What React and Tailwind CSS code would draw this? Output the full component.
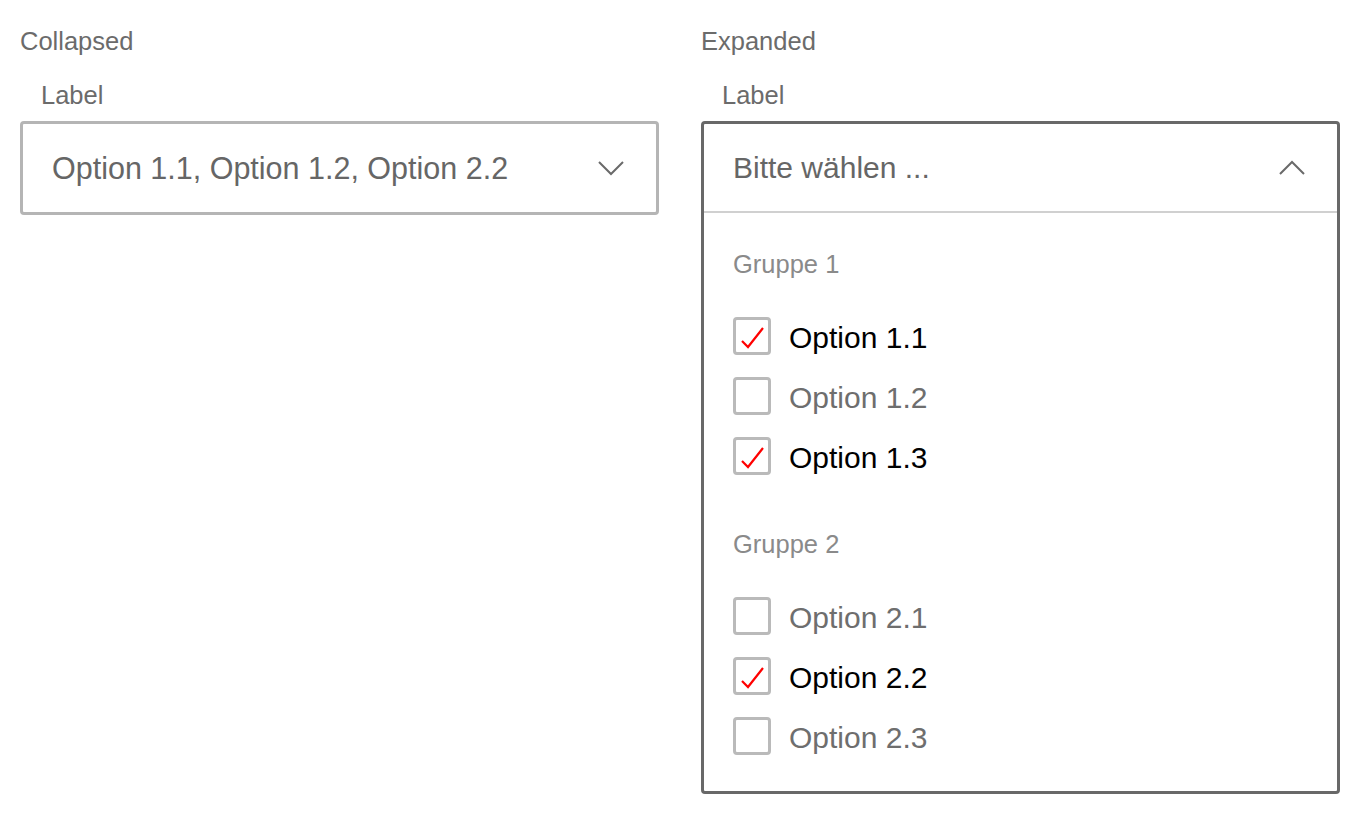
import React from "react";

const groups = [
  {
    name: "Gruppe 1",
    options: [
      { label: "Option 1.1", checked: true },
      { label: "Option 1.2", checked: false },
      { label: "Option 1.3", checked: true },
    ],
  },
  {
    name: "Gruppe 2",
    options: [
      { label: "Option 2.1", checked: false },
      { label: "Option 2.2", checked: true },
      { label: "Option 2.3", checked: false },
    ],
  },
];

function Chevron({ up }) {
  return (
    <svg width="28" height="16" viewBox="0 0 28 16" fill="none">
      <path
        d={up ? "M2 14 L14 2 L26 14" : "M2 2 L14 14 L26 2"}
        stroke="#6a6a6a"
        strokeWidth="2"
      />
    </svg>
  );
}

function Checkbox({ checked }) {
  return (
    <div className="w-[38px] h-[38px] shrink-0 border-[3px] border-[#bababa] rounded-[4px] bg-white flex items-center justify-center">
      {checked && (
        <svg width="32" height="32" viewBox="0 0 32 32" fill="none">
          <path d="M6 21 L12 27 L27 8" stroke="#ff0000" strokeWidth="2.2" />
        </svg>
      )}
    </div>
  );
}

function App() {
  return (
    <div className="flex gap-[42px] px-5 pt-[27px] bg-white min-h-[814px] font-['Liberation_Sans',Arial,sans-serif]">
      {/* collapsed */}
      <div className="w-[639px]">
        <div className="text-[25.5px] leading-[28px] text-[#6b6b6b]">Collapsed</div>
        <div className="mt-[26px] pl-[21px] text-[25.5px] leading-[28px] text-[#6b6b6b]">Label</div>
        <div className="mt-[12px] h-[94px] border-[3px] border-[#b5b5b5] rounded-[4px] flex items-center justify-between pl-[29px] pr-[31px]">
          <span className="text-[30.5px] leading-[36px] text-[#666]">Option 1.1, Option 1.2, Option 2.2</span>
          <Chevron />
        </div>
      </div>

      {/* expanded */}
      <div className="w-[639px]">
        <div className="text-[25.5px] leading-[28px] text-[#6b6b6b]">Expanded</div>
        <div className="mt-[26px] pl-[21px] text-[25.5px] leading-[28px] text-[#6b6b6b]">Label</div>
        <div className="mt-[12px] border-[3px] border-[#686868] rounded-[4px]">
          <div className="h-[89px] border-b-2 border-[#d0d0d0] flex items-center justify-between pl-[29px] pr-[31px]">
            <span className="text-[30px] leading-[36px] text-[#666]">Bitte wählen ...</span>
            <Chevron up />
          </div>
          <div className="pl-[29px] pt-[36px] pb-[25px]">
            {groups.map((g, gi) => (
              <div key={g.name} className={gi > 0 ? "mt-[43px]" : ""}>
                <div className="text-[25.5px] leading-[30px] text-[#8a8a8a]">{g.name}</div>
                <div className="mt-[27px]">
                  {g.options.map((o) => (
                    <div key={o.label} className="h-[60px] flex items-center gap-[18px]">
                      <Checkbox checked={o.checked} />
                      <span className={"text-[30px] leading-[36px] pt-[3px] " + (o.checked ? "text-black" : "text-[#6e6e6e]")}>
                        {o.label}
                      </span>
                    </div>
                  ))}
                </div>
              </div>
            ))}
          </div>
        </div>
      </div>
    </div>
  );
}

export default App;
